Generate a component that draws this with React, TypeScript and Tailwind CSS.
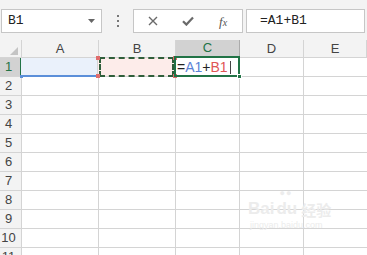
import React from 'react';

const ROWS = [1, 2, 3, 4, 5, 6, 7, 8, 9, 10, 11];

const COLS = [
  { label: 'A', w: 'w-[77px]' },
  { label: 'B', w: 'w-[77px]' },
  { label: 'C', w: 'w-[64px]' },
  { label: 'D', w: 'w-[64px]' },
  { label: 'E', w: 'flex-1' },
];

export default function App() {
  return (
    <div className="w-[367px] h-[255px] overflow-hidden bg-white relative font-['Liberation_Sans',Arial,sans-serif]">
      {/* Formula bar */}
      <div className="h-[40px] bg-[#f3f3f3] flex items-start pt-[9px]">
        <div className="ml-px w-[101px] h-[24px] bg-white border border-[#c6c6c6] flex items-center justify-between pl-[6px] pr-[6px]">
          <span className="font-['Liberation_Mono',monospace] text-[13px] text-[#222]">B1</span>
          <svg width="7" height="4" viewBox="0 0 7 4">
            <path d="M0 0h7L3.5 4z" fill="#666" />
          </svg>
        </div>
        <div className="w-[31px] h-[24px] flex flex-col items-center justify-center gap-[3px] pl-[1px]">
          <span className="w-[2px] h-[2px] bg-[#777]" />
          <span className="w-[2px] h-[2px] bg-[#777]" />
          <span className="w-[2px] h-[2px] bg-[#777]" />
        </div>
        <div className="w-[110px] h-[24px] bg-white border border-[#c6c6c6] flex items-center pl-[14px]">
          <svg width="10" height="10" viewBox="0 0 10 10">
            <path d="M1 1l8 8M9 1l-8 8" stroke="#6a6a6a" strokeWidth="1.4" />
          </svg>
          <svg className="ml-[24px]" width="12" height="10" viewBox="0 0 12 10">
            <path d="M1 5.2l3.4 3.4L11 1.5" stroke="#6a6a6a" strokeWidth="2.2" fill="none" />
          </svg>
          <span className="ml-[25px] font-['Liberation_Serif',serif] italic text-[13px] text-[#555] leading-none">
            f<span className="text-[10px]">x</span>
          </span>
        </div>
        <div className="ml-[3px] w-[119px] h-[24px] bg-white border border-[#c6c6c6] flex items-center pl-[13px]">
          <span className="font-['Liberation_Mono',monospace] text-[13px] text-[#222]">=A1+B1</span>
        </div>
      </div>

      {/* Column headers */}
      <div className="flex h-[18px] bg-[#f3f3f3] border-b border-[#d4d4d4]">
        <div className="w-[22px] border-r border-[#d4d4d4] flex items-end justify-end pr-[3px] pb-[2px]">
          <svg width="8" height="8" viewBox="0 0 8 8">
            <path d="M8 0v8H0z" fill="#c4c4c4" />
          </svg>
        </div>
        {COLS.map((c) => (
          <div
            key={c.label}
            className={
              c.label === 'C'
                ? `${c.w} bg-[#d2d2d2] border-r border-[#ababab] border-b-2 border-b-[#217346] flex items-center justify-center text-[13px] text-[#217346] -mb-px`
                : `${c.w} border-r border-[#d4d4d4] flex items-center justify-center text-[13px] text-[#444]`
            }
          >
            {c.label}
          </div>
        ))}
      </div>

      {/* Rows */}
      {ROWS.map((r) => (
        <div key={r} className="flex h-[19px] border-b border-[#d4d4d4]">
          <div
            className={
              r === 1
                ? 'w-[22px] bg-[#d2d2d2] border-r-2 border-[#217346] flex items-center justify-center pr-[3px] text-[13px] text-[#217346]'
                : 'w-[22px] bg-[#f3f3f3] border-r border-[#d4d4d4] flex items-center justify-center pr-[4px] text-[13px] text-[#444]'
            }
          >
            {r}
          </div>
          {r === 1 ? (
            <>
              <div className="w-[77px] border-r border-[#d4d4d4] bg-[#eaf1fb] relative -ml-px">
                <div className="absolute left-0 right-0 -bottom-px h-[2px] bg-[#5b8fd9]" />
                <div className="absolute -left-px -bottom-[2px] w-[3px] h-[3px] bg-[#5b8fd9]" />
                <div className="absolute -right-[2px] -bottom-[2px] w-[3px] h-[3px] bg-[#5b8fd9]" />
              </div>
              <div className="w-[78px] border-r border-[#d4d4d4] bg-[#fdecea] relative">
                <div className="absolute inset-x-[1px] -top-[1px] -bottom-[1px] border-2 border-dashed border-[#2f5e3a]" />
                <div className="absolute -left-[2px] -top-[2px] w-[4px] h-[4px] bg-[#e06c6c]" />
                <div className="absolute -right-[2px] -top-[2px] w-[4px] h-[4px] bg-[#e06c6c]" />
                <div className="absolute -left-[2px] -bottom-[2px] w-[4px] h-[4px] bg-[#e06c6c]" />
                <div className="absolute -right-[2px] -bottom-[2px] w-[4px] h-[4px] bg-[#e06c6c]" />
              </div>
              <div className="w-[64px] border-r border-[#d4d4d4] relative flex items-center pl-[1px] text-[14px] leading-none">
                <span className="text-[#222]">=</span>
                <span className="text-[#5b83d6]">A1</span>
                <span className="text-[#222]">+</span>
                <span className="text-[#e05555]">B1</span>
                <span className="ml-[2px] w-px h-[13px] bg-[#444]" />
                <div className="absolute -left-[2px] -top-[2px] -right-[1px] -bottom-[1px] border-2 border-[#217346]" />
                <div className="absolute -right-[3px] -bottom-[3px] w-[5px] h-[5px] bg-[#217346] border border-white" />
              </div>
              <div className="w-[64px] border-r border-[#d4d4d4]" />
              <div className="flex-1" />
            </>
          ) : (
            COLS.map((c) => (
              <div key={c.label} className={`${c.w} ${c.label === 'E' ? '' : 'border-r border-[#d4d4d4]'}`} />
            ))
          )}
        </div>
      ))}

      {/* Watermark */}
      <div className="absolute left-[248px] top-[200px] flex flex-col items-start pointer-events-none select-none">
        <div className="flex items-end text-[#ececec] font-bold text-[17px] leading-none">
          <span>Bai</span>
          <span className="relative ml-[2px]">
            du
            <span className="absolute left-[3px] -top-[11px] text-[9px] tracking-[1px]">●●</span>
          </span>
          <span className="ml-[4px] font-['Noto_Sans_CJK_SC',sans-serif] text-[15px]">经验</span>
        </div>
        <div className="mt-[4px] ml-[2px] text-[9px] text-[#ececec] leading-none">jingyan.baidu.com</div>
      </div>
    </div>
  );
}
